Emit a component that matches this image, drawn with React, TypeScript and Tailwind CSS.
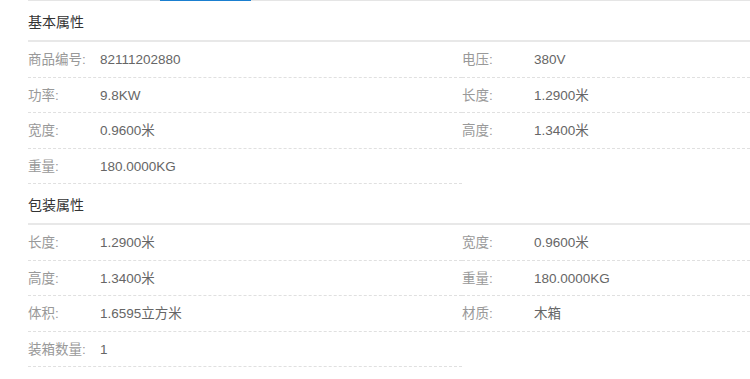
import React from "react";

type Attr = { label: string; value: string };

const basicAttrs: Attr[] = [
  { label: "商品编号:", value: "82111202880" },
  { label: "电压:", value: "380V" },
  { label: "功率:", value: "9.8KW" },
  { label: "长度:", value: "1.2900米" },
  { label: "宽度:", value: "0.9600米" },
  { label: "高度:", value: "1.3400米" },
  { label: "重量:", value: "180.0000KG" },
];

const packAttrs: Attr[] = [
  { label: "长度:", value: "1.2900米" },
  { label: "宽度:", value: "0.9600米" },
  { label: "高度:", value: "1.3400米" },
  { label: "重量:", value: "180.0000KG" },
  { label: "体积:", value: "1.6595立方米" },
  { label: "材质:", value: "木箱" },
  { label: "装箱数量:", value: "1" },
];

function Section({ title, attrs }: { title: string; attrs: Attr[] }) {
  return (
    <section>
      {/* Section title */}
      <div className="h-[41px] flex items-center pt-[3px] border-b-2 border-[#e8e8e8]">
        <h3 className="text-[14px] text-[#333] font-normal">{title}</h3>
      </div>

      {/* Two column attribute list */}
      <div className="grid grid-cols-[434px_1fr]">
        {attrs.map((attr, idx) => (
          <div
            key={idx}
            className="h-[35.5px] flex items-center pt-[2px] border-b border-dashed border-[#e0e0e0] text-[13.5px]"
          >
            <span className="w-[72px] shrink-0 text-[#999]">{attr.label}</span>
            <span className="text-[#666]">{attr.value}</span>
          </div>
        ))}
      </div>
    </section>
  );
}

export default function App() {
  return (
    <div
      className="w-[750px] h-[379px] overflow-hidden bg-white"
      style={{ fontFamily: '"Liberation Sans", "Noto Sans CJK SC", sans-serif' }}
    >
      <div className="ml-[28px]">
        {/* Tab strip edge */}
        <div className="h-px bg-[#e5e5e5] flex">
          <div className="w-[132px]" />
          <div className="w-[91px] bg-[#1a7fd0]" />
        </div>

        <Section title="基本属性" attrs={basicAttrs} />
        <Section title="包装属性" attrs={packAttrs} />
      </div>
    </div>
  );
}
